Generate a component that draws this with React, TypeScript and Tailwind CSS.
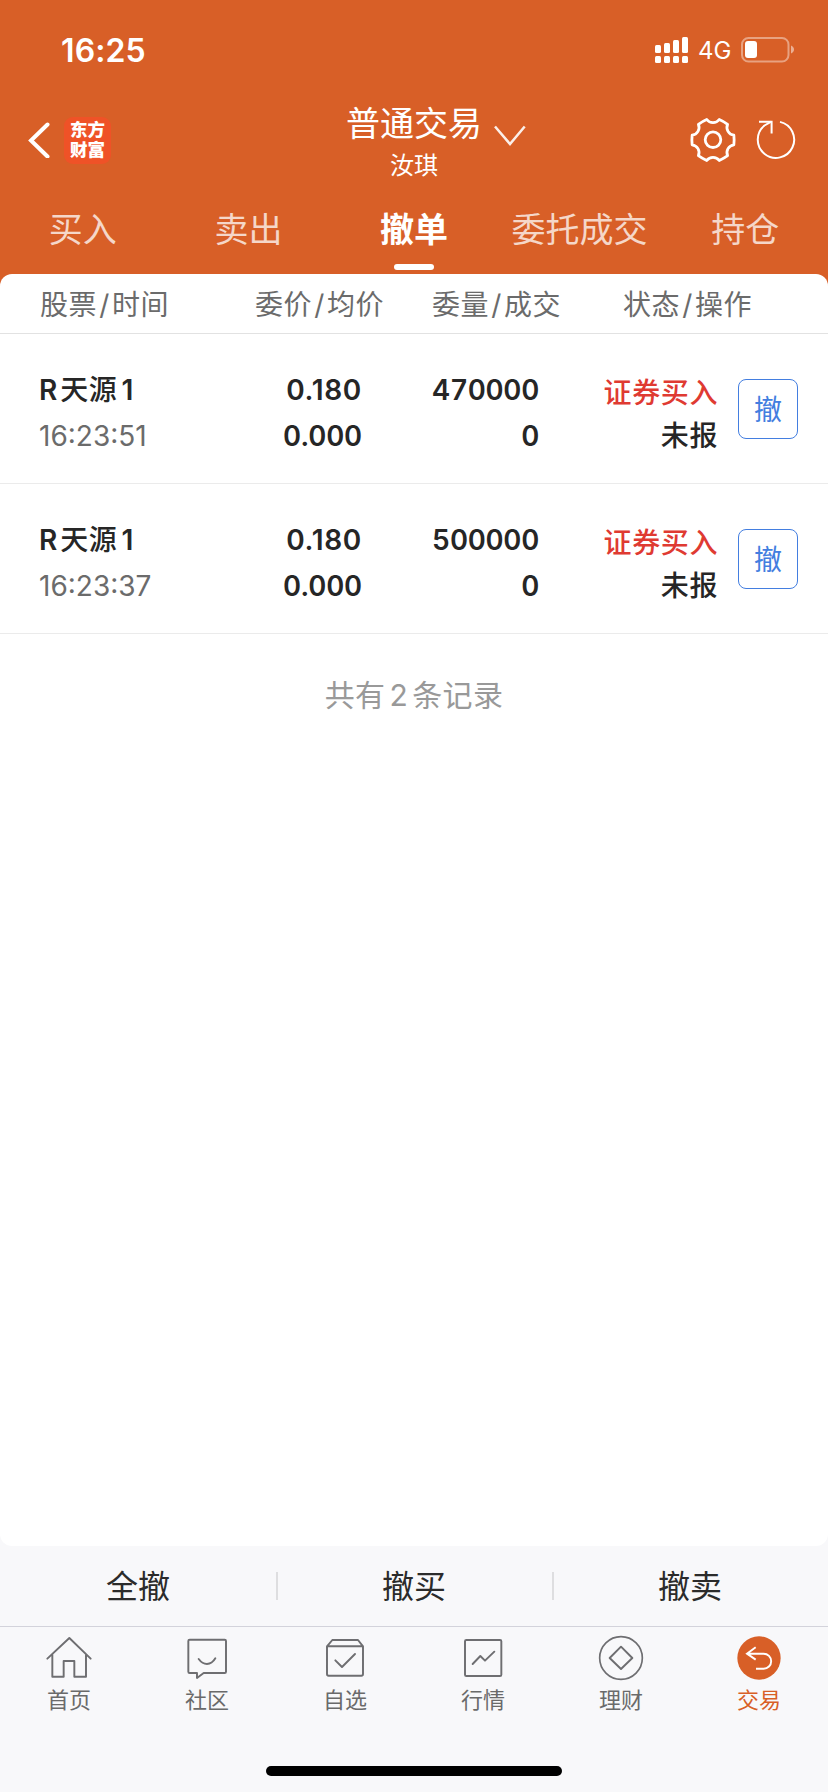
import type { ReactNode } from "react";

const tabs = ["买入", "卖出", "撤单", "委托成交", "持仓"];

const orders = [
  { name: "天源", time: "16:23:51", price: "0.180", avg: "0.000", qty: "470000", filled: "0" },
  { name: "天源", time: "16:23:37", price: "0.180", avg: "0.000", qty: "500000", filled: "0" },
];

function gearPath(cx: number, cy: number) {
  const pt = (r: number, deg: number) => {
    const a = (deg * Math.PI) / 180;
    return `${(cx + r * Math.cos(a)).toFixed(2)} ${(cy + r * Math.sin(a)).toFixed(2)}`;
  };
  let d = `M${pt(21.4, -13)}`;
  for (let i = 0; i < 6; i++) {
    const t = i * 60;
    d += `Q${pt(21.4, t)} ${pt(21.4, t + 13)}C${pt(16.6, t + 19)} ${pt(16.6, t + 41)} ${pt(21.4, t + 47)}`;
  }
  return d + "Z";
}

function StatusBar() {
  return (
    <div className="flex h-[100px] items-center justify-between pl-[61px] pr-[34px]">
      <span className="pt-[2px] text-[32px] font-semibold leading-[40px] tracking-[0.1px]">16:25</span>
      <div className="flex items-center">
        <svg width="33" height="26" viewBox="655 37 33 26" fill="#fff">
          <rect x="655" y="45" width="6" height="8" rx="1.5" />
          <rect x="664" y="43" width="6" height="10" rx="1.5" />
          <rect x="673" y="40" width="6" height="13" rx="1.5" />
          <rect x="682" y="37" width="6" height="16" rx="1.5" />
          <rect x="655" y="56" width="6" height="7" rx="1.5" />
          <rect x="664" y="56" width="6" height="7" rx="1.5" />
          <rect x="673" y="56" width="6" height="7" rx="1.5" />
          <rect x="682" y="56" width="6" height="7" rx="1.5" />
        </svg>
        <span className="ml-[10px] w-[43px] pt-px text-[24px] font-normal leading-[26px]">4G</span>
        <svg width="53" height="26" viewBox="741 37 53 26">
          <rect x="742" y="38" width="46.5" height="23.5" rx="6.5" fill="none" stroke="#fff" strokeOpacity=".42" strokeWidth="2" />
          <rect x="745" y="41" width="12" height="17" rx="3" fill="#fff" />
          <path d="M791 45.5c4 1.5 4 6.500 0 8z" fill="#fff" fillOpacity=".5" />
        </svg>
      </div>
    </div>
  );
}

function TitleBar() {
  return (
    <div className="grid h-[90px] grid-cols-[1fr_auto_1fr]">
      <div className="flex h-[80px] items-center pl-[28px]">
        <svg width="22" height="36" viewBox="28 122 22 36" fill="none" stroke="#fff" strokeWidth="4">
          <path d="M47.500 124.500L31 140.500L47.500 156.500" strokeLinecap="round" />
        </svg>
        <div className="ml-[14px] flex size-[47px] flex-col items-center justify-center rounded-[9px] bg-[#ef5227] font-['Liberation_Sans','Noto_Sans_CJK_SC',sans-serif] text-[17.5px] font-black leading-[20px]">
          <span>东方</span>
          <span>财富</span>
        </div>
      </div>
      <div className="flex flex-col items-center">
        <div className="relative mt-[3px] flex h-[42px] items-center text-[34px] leading-[42px]">
          普通交易
          <svg className="absolute left-[147px] top-[19px]" width="34" height="26" viewBox="492 122 34 26" fill="none" stroke="#fff" strokeWidth="2.500" strokeOpacity=".9">
            <path d="M494 126.500L509 144L523.700 126.500" />
          </svg>
        </div>
        <div className="mt-[6px] text-[24px] leading-[30px]">汝琪</div>
      </div>
      <div className="flex h-[80px] items-center justify-end gap-[18px] pr-[31px]">
        <svg width="48" height="48" viewBox="689 116.500 48 48" fill="none" stroke="#fff" strokeWidth="2.800" strokeLinejoin="round">
          <path d={gearPath(713, 140.5)} />
          <circle cx="713" cy="140.200" r="7.800" />
        </svg>
        <svg width="42" height="48" viewBox="755 116.500 42 48" fill="none" stroke="#fff" strokeWidth="2">
          <path d="M780 122.400A18.200 18.200 0 1 1 764.500 126L771.300 122.200" />
          <path d="M759 122.200H771.600V134" />
        </svg>
      </div>
    </div>
  );
}

function Header() {
  return (
    <header className="h-[274px] text-white">
      <StatusBar />
      <TitleBar />
      <nav className="grid h-[84px] grid-cols-5 text-[34px] leading-[50px]">
        {tabs.map((t) => (
          <div key={t} className="flex flex-col items-center pt-[15px]">
            {t === "撤单" ? (
              <>
                <span className="font-bold">{t}</span>
                <span className="mt-[9px] h-[6px] w-[40px] rounded-full bg-white" />
              </>
            ) : (
              <span className="whitespace-nowrap text-white/75">{t}</span>
            )}
          </div>
        ))}
      </nav>
    </header>
  );
}

function HeadCell({ a, b }: { a: string; b: string }) {
  return (
    <div className="flex tracking-[0.6px]">
      <span>{a}</span>
      <span className="mx-[2px]">/</span>
      <span>{b}</span>
    </div>
  );
}

function OrderRow({ o }: { o: (typeof orders)[number] }) {
  return (
    <div className="flex h-[150px] border-b border-[#ebebeb] text-[28px] font-semibold leading-[46px] text-[#262626]">
      <div className="w-[200px] pl-[39px] pt-[33px]">
        <div className="flex">
          <span>R</span>
          <span className="ml-[3px] font-medium tracking-[0.6px]">{o.name}</span>
          <span className="ml-[4px]">1</span>
        </div>
        <div className="font-normal text-[#6b6b6b]">{o.time}</div>
      </div>
      <div className="w-[162px] pt-[33px] text-right">
        <div className="tracking-[0.7px]">{o.price}</div>
        <div className="tabular-nums tracking-[-0.2px]">{o.avg}</div>
      </div>
      <div className="w-[177px] pt-[33px] text-right tabular-nums tracking-[-0.3px]">
        <div>{o.qty}</div>
        <div>{o.filled}</div>
      </div>
      <div className="w-[179px] pt-[38px] text-right font-medium leading-[43px] tracking-[0.6px]">
        <div className="text-[#df3a32]">证券买入</div>
        <div>未报</div>
      </div>
      <button className="ml-[20px] mt-[45px] flex size-[60px] items-center justify-center rounded-[8px] border border-[#437ee0] pt-[2px] text-[28px] font-normal leading-[40px] text-[#437ee0]">
        撤
      </button>
    </div>
  );
}

function NavItem({ label, x, active, children }: { label: string; x: number; active?: boolean; children: ReactNode }) {
  return (
    <div className={active ? "flex flex-1 flex-col items-center text-[#d85f27]" : "flex flex-1 flex-col items-center text-[#6a6a6a]"}>
      <svg width="48" height="48" viewBox={`${x} 312 144 144`} fill="none" stroke="#6e6e71" strokeWidth="5.800" strokeLinejoin="round" strokeLinecap="round">
        {children}
      </svg>
      <span className="text-[22px] leading-[36px]">{label}</span>
    </div>
  );
}

export default function App() {
  return (
    <div className="flex h-[1792px] w-[828px] flex-col overflow-hidden bg-[#f8f8fa] font-['Inter','Noto_Sans_CJK_SC',sans-serif]">
      <div className="bg-[#d85f27]">
        <Header />
        <div className="h-[60px] rounded-t-[12px] border-b border-[#e2e2e2] bg-white text-[28px] leading-[62px] text-[#6b6b6b]">
          <div className="flex h-[59px]">
            <div className="w-[215px] pl-[40px]"><HeadCell a="股票" b="时间" /></div>
            <div className="w-[177px] pl-[40px]"><HeadCell a="委价" b="均价" /></div>
            <div className="w-[191px] pl-[40px]"><HeadCell a="委量" b="成交" /></div>
            <div className="pl-[40px]"><HeadCell a="状态" b="操作" /></div>
          </div>
        </div>
      </div>
      <main className="flex-1 rounded-b-[12px] bg-white">
        {orders.map((o) => (
          <OrderRow key={o.time} o={o} />
        ))}
        <div className="flex justify-center pt-[41px] text-[30px] leading-[40px] tracking-[0.4px] text-[#999]">
          共有<span className="mx-[4px]">2</span>条记录
        </div>
      </main>
      <div className="grid h-[80px] grid-cols-3 content-center text-center text-[32px] leading-[30px] text-[#2b2b2b]">
        {["全撤", "撤买", "撤卖"].map((t, i) => (
          <div key={t} className={i ? "h-[28px] border-l-2 border-[#dedee0] pr-[2px]" : "h-[28px]"}>{t}</div>
        ))}
      </div>
      <footer className="flex h-[166px] flex-col items-center border-t border-[#d3d3db] pt-[7px]">
        <div className="flex w-full">
          <NavItem label="首页" x={135}>
            <path d="M142 386L208 324L272 386M157 374V440H191V393H223V440H258V374" />
          </NavItem>
          <NavItem label="社区" x={549}>
            <path d="M569 329H674Q678 329 678 333V425Q678 429 674 429H611L591 444V429H569Q565 429 565 425V333Q565 329 569 329Z" />
            <path d="M596 387Q607 402 621 402Q636 402 646 385" />
          </NavItem>
          <NavItem label="自选" x={963}>
            <path d="M981 349L997 330H1074L1089 349V432Q1089 437 1084 437H986Q981 437 981 432ZM981 349H1089M1006 391L1026 411L1065 372" />
          </NavItem>
          <NavItem label="行情" x={135}>
            <rect x="153" y="330" width="109" height="108" rx="4" />
            <path d="M176 402L199 378L213 392L241 365" />
          </NavItem>
          <NavItem label="理财" x={549}>
            <circle cx="621" cy="384" r="64" strokeWidth="5" />
            <path d="M621 350L655 384L621 417L587 384Z" />
          </NavItem>
          <NavItem label="交易" x={963} active>
            <circle cx="1035" cy="384" r="65" fill="#d85f27" stroke="none" />
            <path d="M1025 352L999 371L1025 389M999 371H1049A22.500 22.500 0 0 1 1049 416H1026" stroke="#fff" strokeLinecap="butt" strokeLinejoin="miter" />
          </NavItem>
        </div>
        <div className="mt-[48px] h-[10px] w-[296px] rounded-full bg-black" />
      </footer>
    </div>
  );
}
